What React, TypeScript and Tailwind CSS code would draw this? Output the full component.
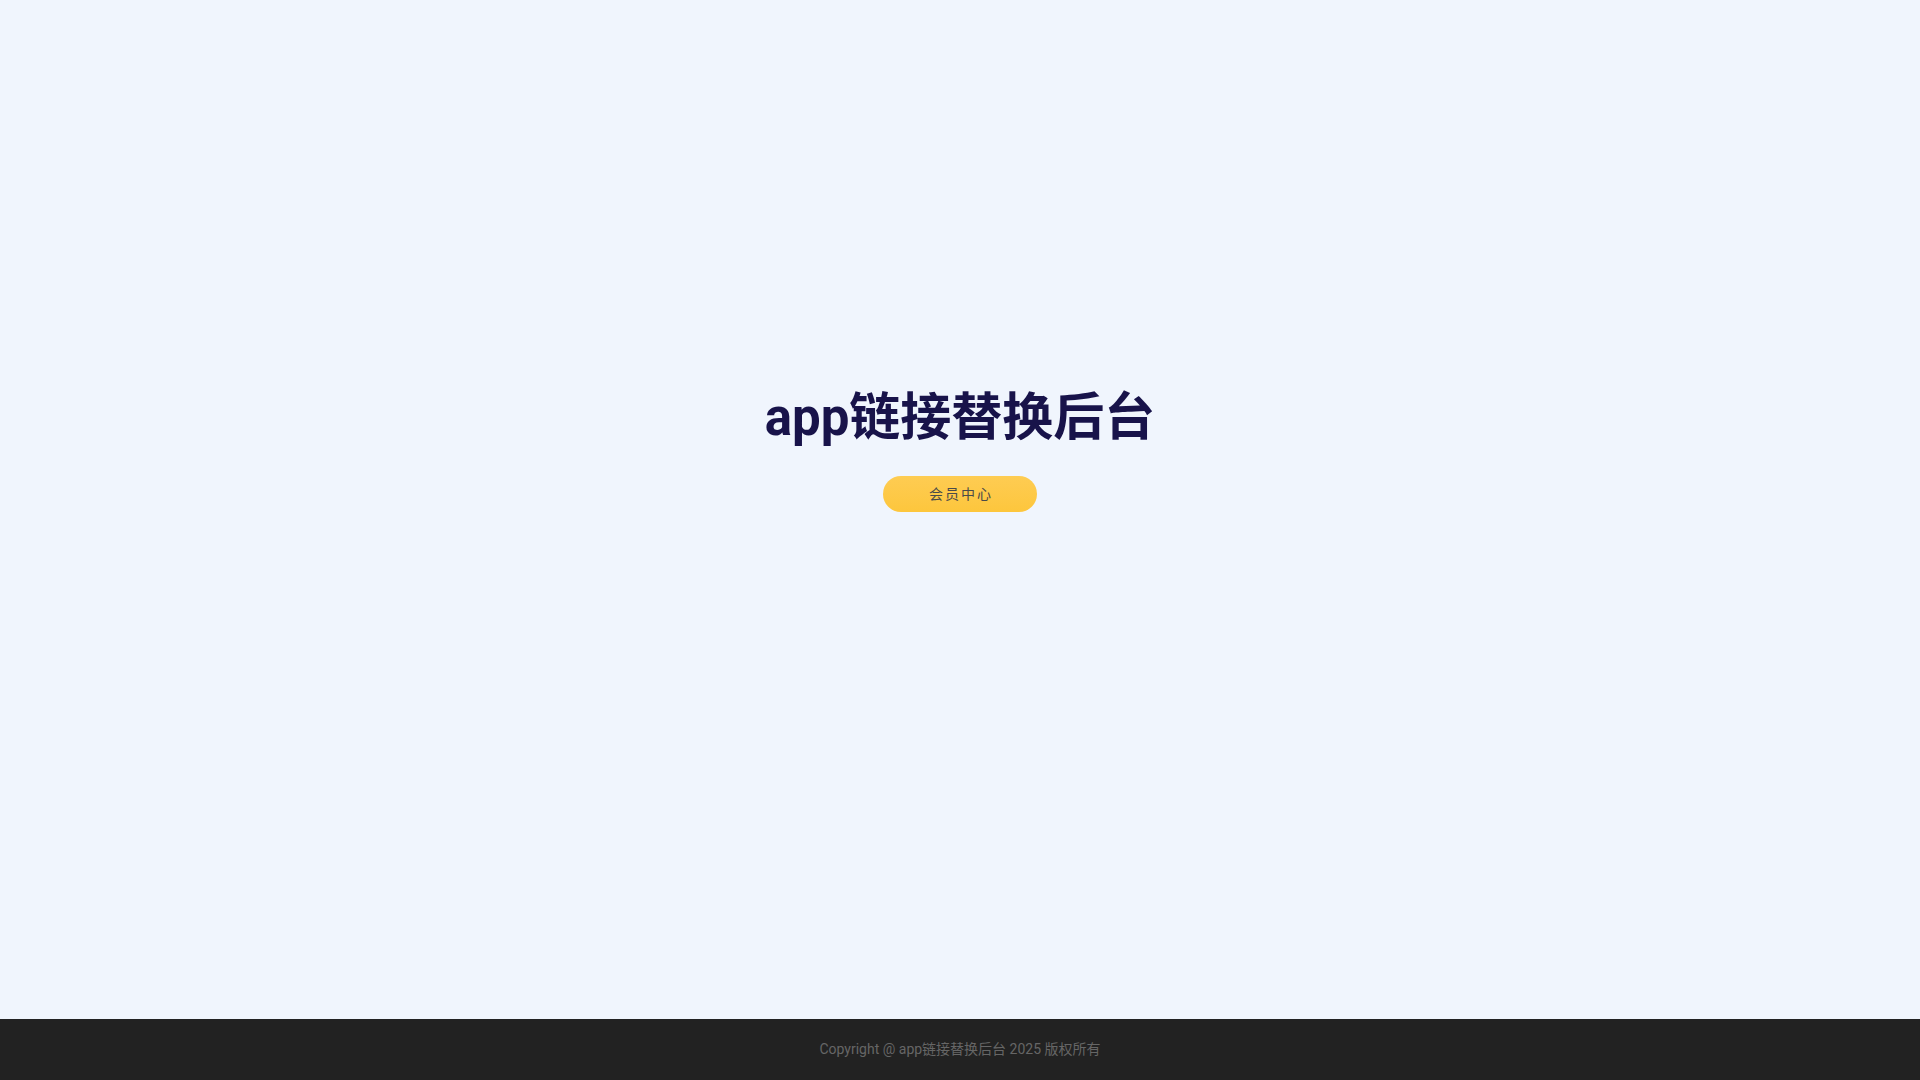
export default function App() {
  return (
    <div
      className="flex min-h-screen flex-col bg-[#f0f5fd]"
      style={{ fontFamily: 'Roboto, "Noto Sans CJK SC", sans-serif' }}
    >
      <main className="flex flex-1 flex-col items-center pt-[380px]">
        <h1 className="text-[51px] font-bold leading-[75px] text-[#18134a]">app链接替换后台</h1>
        <button className="mt-[21px] h-9 w-[154px] rounded-full bg-gradient-to-b from-[#fecc52] to-[#fdc63c] pl-[2px] text-[14px] tracking-[2px] text-[#4a4a4a]">
          会员中心
        </button>
      </main>
      <footer className="flex h-[61px] items-center justify-center bg-[#222] text-[14px] text-[#666]">
        Copyright @ app链接替换后台 2025 版权所有
      </footer>
    </div>
  )
}
